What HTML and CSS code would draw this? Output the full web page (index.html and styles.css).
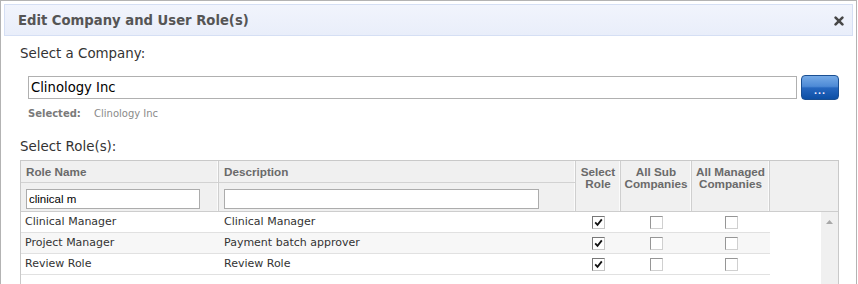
FILE: index.html
```html
<!DOCTYPE html>
<html>
<head>
<meta charset="utf-8">
<link rel="stylesheet" href="styles.css">
</head>
<body>
<div class="dialog">
  <div class="titlebar">
    <span class="title">Edit Company and User Role(s)</span>
    <svg class="close" width="10" height="10" viewBox="0 0 10 10"><path d="M1.6 1.6 L8.4 8.4 M8.4 1.6 L1.6 8.4" stroke="#474747" stroke-width="2.6" stroke-linecap="round"/></svg>
  </div>
  <div class="content">
    <div class="label">Select a Company:</div>
    <div class="company-row">
      <input class="company-input" type="text" value="Clinology Inc">
      <button class="browse">...</button>
    </div>
    <div class="selected"><span class="sel-key">Selected:</span><span class="sel-val">Clinology Inc</span></div>
    <div class="label roles-label">Select Role(s):</div>
    <div class="grid">
      <div class="ghead">
        <div class="hcol">
          <div class="htitle">Role Name</div>
          <div class="hfilter"><input class="filter f-role" type="text" value="clinical m"></div>
        </div>
        <div class="hcol">
          <div class="htitle">Description</div>
          <div class="hfilter"><input class="filter f-desc" type="text" value=""></div>
        </div>
        <div class="hcell">Select<br>Role</div>
        <div class="hcell">All Sub<br>Companies</div>
        <div class="hcell">All Managed<br>Companies</div>
        <div class="hcell last"></div>
      </div>
      <div class="gbody">
        <div class="rows">
          <div class="row">
            <div class="cell">Clinical Manager</div>
            <div class="cell">Clinical Manager</div>
            <div class="cell c"><span class="cb checked"><svg width="9" height="9" viewBox="0 0 9 9"><path d="M1.2 4.4 L3.5 6.8 L7.8 1.4" stroke="#111" stroke-width="1.8" fill="none"/></svg></span></div>
            <div class="cell c"><span class="cb"></span></div>
            <div class="cell c"><span class="cb"></span></div>
          </div>
          <div class="row alt">
            <div class="cell">Project Manager</div>
            <div class="cell">Payment batch approver</div>
            <div class="cell c"><span class="cb checked"><svg width="9" height="9" viewBox="0 0 9 9"><path d="M1.2 4.4 L3.5 6.8 L7.8 1.4" stroke="#111" stroke-width="1.8" fill="none"/></svg></span></div>
            <div class="cell c"><span class="cb"></span></div>
            <div class="cell c"><span class="cb"></span></div>
          </div>
          <div class="row">
            <div class="cell">Review Role</div>
            <div class="cell">Review Role</div>
            <div class="cell c"><span class="cb checked"><svg width="9" height="9" viewBox="0 0 9 9"><path d="M1.2 4.4 L3.5 6.8 L7.8 1.4" stroke="#111" stroke-width="1.8" fill="none"/></svg></span></div>
            <div class="cell c"><span class="cb"></span></div>
            <div class="cell c"><span class="cb"></span></div>
          </div>
        </div>
        <div class="spacer"></div>
        <div class="vscroll"><svg width="7" height="4" viewBox="0 0 7 4"><path d="M0 4 L3.5 0 L7 4 Z" fill="#a8a8a8"/></svg></div>
      </div>
    </div>
  </div>
</div>
</body>
</html>
```
FILE: styles.css
```css
html, body {
  margin: 0;
  padding: 0;
  background: #fff;
  overflow: hidden;
}
body {
  font-family: "DejaVu Sans", Verdana, sans-serif;
  color: #333;
}
.dialog {
  box-sizing: border-box;
  width: 857px;
  height: 420px;
  border: 1px solid #b3b3b3;
  padding: 3px;
}
.titlebar {
  box-sizing: border-box;
  height: 32px;
  border: 1px solid #d5dff4;
  background: linear-gradient(#f1f4fc, #e9eefa);
  display: flex;
  align-items: center;
  justify-content: space-between;
  padding: 0 8px 0 13px;
}
.title {
  font-weight: bold;
  font-size: 13.2px;
  color: #555;
}
.close {
  display: block;
  margin-top: 1px;
}
.content {
  padding-left: 16px;
}
.label {
  font-size: 13.4px;
  line-height: 16px;
  margin-top: 10px;
  color: #333;
}
.company-row {
  display: flex;
  align-items: center;
  margin-top: 13px;
  padding-left: 8px;
}
.company-input {
  box-sizing: border-box;
  width: 769px;
  height: 23px;
  border: 1px solid #b0b0b0;
  margin: 0;
  padding: 0 0 0 2px;
  font-family: "DejaVu Sans", Verdana, sans-serif;
  font-size: 13.2px;
  color: #000;
  outline: none;
}
.browse {
  box-sizing: border-box;
  width: 38px;
  height: 25px;
  margin: 0 0 0 4px;
  padding: 4px 0 0 0;
  border: 1px solid #1a4f92;
  border-radius: 4px;
  background: linear-gradient(#76aae6 0%, #4d8ad6 45%, #2667bf 52%, #0d4fa5 100%);
  color: #f0eaff;
  font-family: "Liberation Sans", Arial, sans-serif;
  font-weight: bold;
  font-size: 11px;
  letter-spacing: 1px;
  line-height: 12px;
}
.selected {
  margin-top: 7px;
  padding-left: 8px;
  font-size: 10px;
  line-height: 14px;
  display: flex;
}
.sel-key {
  font-weight: bold;
  color: #7a7a7a;
  width: 66px;
}
.sel-val {
  color: #8a8a8a;
}
.roles-label {
  margin-top: 18px;
}
.grid {
  box-sizing: border-box;
  width: 819px;
  margin-top: 5px;
  border: 1px solid #c9c9c9;
  border-bottom: none;
}
.ghead {
  display: grid;
  grid-template-columns: 198px 357px 45px 71px 78px 68px;
  background: #f0f0f0;
  border-bottom: 1px solid #cdcdcd;
  height: 50px;
}
.hcol, .hcell {
  box-sizing: border-box;
  border-right: 1px solid #cfcfcf;
  box-shadow: inset -1px 0 0 #fbfbfb;
}
.hcell.last {
  border-right: none;
  box-shadow: none;
}
.htitle {
  box-sizing: border-box;
  height: 22px;
  border-bottom: 1px solid #d2d2d2;
  padding-left: 5px;
  font-family: "Liberation Sans", Arial, sans-serif;
  font-weight: bold;
  font-size: 11.7px;
  line-height: 21px;
  color: #6a6a6a;
}
.hfilter {
  padding: 5px 0 0 5px;
}
.filter {
  box-sizing: border-box;
  height: 20px;
  border: 1px solid #acacac;
  margin: 0;
  padding: 0 0 0 2px;
  font-family: "Liberation Sans", Arial, sans-serif;
  font-size: 11.5px;
  color: #000;
  background: #fff;
  outline: none;
}
.f-role { width: 174px; }
.f-desc { width: 315px; }
.hcell {
  text-align: center;
  padding-top: 5px;
  font-family: "Liberation Sans", Arial, sans-serif;
  font-weight: bold;
  font-size: 11.7px;
  line-height: 12px;
  color: #6a6a6a;
}
.gbody {
  display: flex;
  height: 200px;
}
.rows {
  width: 749px;
}
.row {
  display: grid;
  grid-template-columns: 198px 357px 45px 71px 78px;
  height: 21px;
  box-sizing: border-box;
  border-bottom: 1px solid #e1e1e1;
  font-size: 11px;
  color: #333;
}
.row.alt {
  background: #f7f7f7;
}
.cell {
  padding-left: 4px;
  line-height: 20px;
  white-space: nowrap;
}
.cell + .cell {
  padding-left: 5px;
}
.cell.c {
  padding-left: 0;
  display: flex;
  justify-content: center;
  align-items: center;
}
.cb {
  box-sizing: border-box;
  width: 13px;
  height: 13px;
  border: 1px solid;
  border-color: #969696 #d0d0d0 #d0d0d0 #969696;
  background: #fff;
  display: flex;
  align-items: center;
  justify-content: center;
}
.cb.checked {
  border-color: #787878 #c6c6c6 #c6c6c6 #787878;
}
.cb svg {
  display: block;
}
.spacer {
  width: 51px;
}
.vscroll {
  width: 17px;
  background: #f0f0f0;
  display: flex;
  justify-content: center;
  align-items: flex-start;
  padding-top: 8px;
  box-sizing: border-box;
}
.vscroll svg {
  display: block;
}
```
